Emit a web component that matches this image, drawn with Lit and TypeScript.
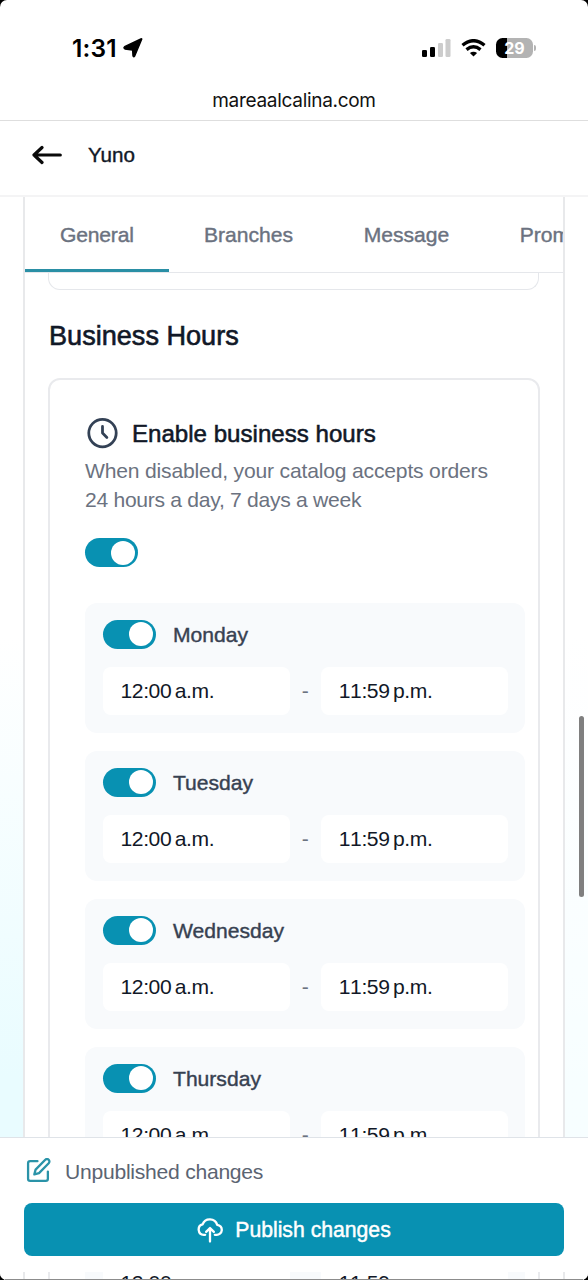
import { LitElement, html, css, svg } from "lit";
import { customElement, property } from "lit/decorators.js";

@customElement("toggle-switch")
class ToggleSwitch extends LitElement {
  static styles = css`
    :host {
      display: block;
      flex: none;
      box-sizing: border-box;
      width: 53px;
      height: 29px;
      padding: 3px;
      border-radius: 15px;
      background: #0891b2;
    }
    .knob {
      width: 24px;
      height: 24px;
      margin: -0.5px 0 0 auto;
      border-radius: 50%;
      background: #fff;
    }
  `;
  render() {
    return html`<div class="knob"></div>`;
  }
}

@customElement("day-card")
class DayCard extends LitElement {
  @property() day = "";
  @property() from = "12:00 a.m.";
  @property() to = "11:59 p.m.";

  static styles = css`
    :host {
      display: block;
      box-sizing: border-box;
      height: 130px;
      padding: 16px 17px 18px 17.500px;
      border-radius: 12px;
      background: #f8fafc;
    }
    .head {
      display: flex;
      align-items: center;
      gap: 17.500px;
      height: 30px;
      color: #374151;
      font-size: 21.1px;
      -webkit-text-stroke: 0.4px #374151;
    }
    .name {
      padding-top: 1px;
    }
    .times {
      display: grid;
      grid-template-columns: 1fr 31px 1fr;
      margin-top: 18px;
      height: 48px;
    }
    .time {
      display: flex;
      align-items: center;
      padding-left: 18px;
      border-radius: 8px;
      background: #fff;
      color: #111827;
      font-size: 21.1px;
      font-kerning: none;
      letter-spacing: -0.4px;
      word-spacing: -2px;
    }
    .dash {
      display: flex;
      align-items: center;
      justify-content: center;
      color: #6b7280;
      font-size: 21px;
    }
  `;
  render() {
    return html`
      <div class="head"><toggle-switch></toggle-switch><span class="name">${this.day}</span></div>
      <div class="times">
        <div class="time">${this.from}</div>
        <div class="dash">-</div>
        <div class="time">${this.to}</div>
      </div>
    `;
  }
}

@customElement("app-root")
class AppRoot extends LitElement {
  static styles = css`
    :host {
      display: block;
      position: relative;
      width: 588px;
      height: 1280px;
      overflow: hidden;
      background: #000;
      font-family: "Liberation Sans", Arial, sans-serif;
    }
    .screen {
      display: flex;
      flex-direction: column;
      height: 1280px;
      overflow: hidden;
      border-radius: 7px;
      background: #fff;
    }
    .status {
      display: flex;
      align-items: center;
      justify-content: space-between;
      height: 40px;
      padding: 28px 52px 0 72px;
      font-family: Inter, sans-serif;
    }
    .clock {
      display: flex;
      align-items: center;
      gap: 6px;
      font-size: 24.5px;
      font-weight: 600;
      letter-spacing: 0.2px;
      color: #000;
    }
    .indicators {
      display: flex;
      align-items: center;
    }
    .wifi {
      margin: 0 10px 0 10px;
    }
    .battery {
      display: flex;
      align-items: center;
      justify-content: center;
      width: 37px;
      height: 20px;
      border-radius: 6.5px;
      background: linear-gradient(90deg, #000 11px, #b3b3b3 11px);
      color: #fff;
      font-size: 16px;
      font-weight: 700;
    }
    .nub {
      width: 2px;
      height: 6px;
      margin-left: 1px;
      border-radius: 0 2px 2px 0;
      background: #b3b3b3;
    }
    .url {
      height: 52px;
      border-bottom: 1px solid #dedede;
      line-height: 66px;
      text-align: center;
      font-family: Inter, sans-serif;
      font-size: 19px;
      letter-spacing: -0.3px;
      color: #111;
    }
    .bar {
      display: flex;
      align-items: center;
      gap: 26px;
      height: 68px;
      padding: 0 0 6px 32px;
      border-bottom: 2px solid #f4f4f5;
      color: #111827;
      font-size: 20.6px;
      -webkit-text-stroke: 0.4px #111827;
    }
    .page {
      flex: 1;
      min-height: 0;
      padding: 0 23px 0 23px;
      overflow: hidden;
      background:
        linear-gradient(90deg, transparent 50%, rgba(255, 255, 255, 0.65) 50%),
        linear-gradient(180deg, #fff 440px, #e9fcff 880px, #e9fcff 941px, #fff 942px);
    }
    .panel {
      height: 1084px;
      overflow: hidden;
      border: solid #e8e9eb;
      border-width: 0 2px;
      background: #fff;
    }
    .tabs {
      display: flex;
      height: 75px;
      overflow: hidden;
      border-bottom: 1px solid #e5e7eb;
    }
    .tab {
      flex: none;
      box-sizing: border-box;
      height: 75px;
      padding: 0 35px;
      line-height: 75px;
      font-size: 21.1px;
      color: #6b7280;
      -webkit-text-stroke: 0.4px #6b7280;
    }
    .tab:nth-child(n + 3) {
      margin-left: 0.5px;
    }
    .active {
      width: 144px;
      letter-spacing: -0.2px;
      border-bottom: 3px solid #2a8fa5;
    }
    .body {
      padding: 0 23px 0 23px;
    }
    .previous {
      height: 16px;
      margin-right: 1px;
      border: 1.5px solid #e5e7eb;
      border-top: 0;
      border-radius: 0 0 12px 12px;
    }
    h2 {
      margin: 28px 0 0 1px;
      font-size: 27.1px;
      line-height: 36px;
      font-weight: 400;
      color: #111827;
      -webkit-text-stroke: 0.6px #111827;
    }
    .card {
      margin-top: 24px;
      padding: 38px 13px 0 35px;
      border: 2px solid #e9eaed;
      border-radius: 12px;
    }
    .title {
      display: flex;
      align-items: center;
      gap: 12px;
      height: 31px;
      font-size: 24.1px;
      color: #111827;
      -webkit-text-stroke: 0.55px #111827;
    }
    .desc {
      margin: 7px 0 24px;
      font-size: 21.1px;
      line-height: 29px;
      letter-spacing: -0.18px;
      color: #6b7280;
    }
    .tight {
      letter-spacing: -0.29px;
    }
    .days {
      display: flex;
      flex-direction: column;
      gap: 18px;
      margin-top: 36px;
    }
    .footer {
      position: absolute;
      left: 0;
      right: 0;
      top: 1137px;
      height: 134px;
      border-top: 1px solid #dfe3e8;
      background: #fff;
    }
    .pending {
      display: flex;
      align-items: center;
      gap: 14px;
      height: 65px;
      padding-left: 26px;
      font-size: 21.1px;
      letter-spacing: -0.25px;
      color: #5b6472;
    }
    .pending span {
      padding-top: 2px;
    }
    .publish {
      display: flex;
      align-items: center;
      justify-content: center;
      gap: 12px;
      height: 53px;
      margin: 0 24px;
      border-radius: 8px;
      background: #0891b2;
      color: #fff;
      font-size: 21.2px;
      -webkit-text-stroke: 0.45px #fff;
    }
    .thumb {
      position: absolute;
      left: 579px;
      top: 716px;
      width: 4.5px;
      height: 181px;
      border-radius: 3px;
      background: #7f7f7f;
    }
    .edge {
      position: absolute;
      left: 5px;
      right: 5px;
      bottom: 0;
      height: 1px;
      background: #8c8c8c;
    }
    svg {
      display: block;
      flex: none;
    }
  `;

  render() {
    const days = ["Monday", "Tuesday", "Wednesday", "Thursday", "Friday"];
    const tabs = ["General", "Branches", "Message", "Promotions"];
    const bars = [
      [0, 11, 7, "#000"],
      [8, 8, 10, "#000"],
      [16, 4, 14, "#ccc"],
      [23.5, 0, 18, "#ccc"],
    ];
    return html`
      <div class="screen">
        <div class="status">
          <div class="clock">
            <span>1:31</span>
            <svg width="20" height="20" viewBox="0 0 20 20">
              <path d="M18.700 1.300 11.600 18.200Q10.700 19.400 10 18L9.600 12 2 11Q.2 9.700 1.600 8.700L17.900 1Q19 .5 18.700 1.300Z" fill="#000" stroke="#000" stroke-width="1.400" stroke-linejoin="round" />
            </svg>
          </div>
          <div class="indicators">
            <svg width="29" height="18" viewBox="0 0 29 18">
              ${bars.map(([x, y, h, c]) => svg`<rect x=${x} y=${y} width="5" height=${h} rx="1.3" fill=${c} />`)}
            </svg>
            <svg class="wifi" width="25" height="18" viewBox="0 0 24 18" fill="none" stroke="#000" stroke-width="3.4">
              <path d="M1 6.2Q12-2.8 23 6.2" />
              <path d="M5 10.6Q12 5 19 10.6" />
              <path d="M12 17.600 8.400 14Q12 11.300 15.600 14Z" fill="#000" stroke="none" />
            </svg>
            <div class="battery">29</div>
            <div class="nub"></div>
          </div>
        </div>
        <div class="url">mareaalcalina.com</div>
        <div class="bar">
          <svg width="30" height="20" viewBox="0 0 30 20" fill="none" stroke="#0a0a0a" stroke-width="3.2" stroke-linecap="round" stroke-linejoin="round">
            <path d="M28.300 10H2M10 2.500 2 10l8 7.500" />
          </svg>
          <span>Yuno</span>
        </div>
        <div class="page">
          <div class="panel">
            <div class="tabs">
              ${tabs.map((t, i) => html`<div class="tab ${i === 0 ? "active" : ""}">${t}</div>`)}
            </div>
            <div class="body">
              <div class="previous"></div>
              <h2>Business Hours</h2>
              <div class="card">
                <div class="title">
                  <svg width="35" height="35" viewBox="0 0 24 24" fill="none" stroke="#334155" stroke-width="1.900" stroke-linecap="round" stroke-linejoin="round">
                    <circle cx="12" cy="11.700" r="9.400" />
                    <path d="M12 7.200V11.700l3 3" />
                  </svg>
                  <span>Enable business hours</span>
                </div>
                <div class="desc">
                  When disabled, your catalog accepts orders<br /><span class="tight">24 hours a day, 7 days a week</span>
                </div>
                <toggle-switch></toggle-switch>
                <div class="days">${days.map((d) => html`<day-card .day=${d}></day-card>`)}</div>
              </div>
            </div>
          </div>
        </div>
      </div>
      <div class="thumb"></div>
      <div class="footer">
        <div class="pending">
          <svg width="25" height="25" viewBox="0 0 24 24" fill="none" stroke="#2a93a8" stroke-width="2.200" stroke-linecap="round" stroke-linejoin="round">
            <path d="M11 3H4a2 2 0 0 0-2 2V20a2 2 0 0 0 2 2H19a2 2 0 0 0 2-2V13" />
            <path d="M18.500 1.700a2.300 2.300 0 0 1 3.300 3.300L12.500 14.500l-4.500 1.200 1.200-4.500Z" />
          </svg>
          <span>Unpublished changes</span>
        </div>
        <div class="publish">
          <svg width="26" height="28" viewBox="0 0 27 28" fill="none" stroke="#fff" stroke-width="2.400" stroke-linecap="round" stroke-linejoin="round">
            <path d="M8.500 19H7A5.500 5.500 0 0 1 5.800 8.200 8 8 0 0 1 21 8.600 5.200 5.200 0 0 1 20 19h-1.500" />
            <path d="M13.500 26V12M9.500 16l4-4 4 4" />
          </svg>
          <span>Publish changes</span>
        </div>
      </div>
      <div class="edge"></div>
    `;
  }
}
